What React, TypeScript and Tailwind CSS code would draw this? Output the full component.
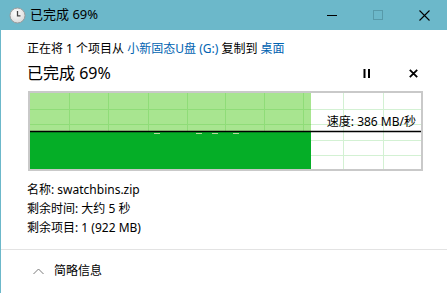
import React from "react";

const font = { fontFamily: '"Noto Sans", "Noto Sans CJK SC", sans-serif' };

function Clock() {
  return (
    <svg width="17" height="17" viewBox="0 0 17 17">
      <defs>
        <radialGradient id="cg" cx="40%" cy="35%" r="70%">
          <stop offset="0%" stopColor="#ffffff" />
          <stop offset="100%" stopColor="#d8d8d8" />
        </radialGradient>
      </defs>
      <circle cx="8.5" cy="8.5" r="7.5" fill="url(#cg)" stroke="#9a9a9a" strokeWidth="1" />
      <path d="M8.5 4 V8.8 H11.5" stroke="#444" strokeWidth="1.3" fill="none" />
    </svg>
  );
}

function Chart() {
  const vx = [39, 78, 118, 157, 195, 234, 273, 313, 353];
  const hy = [16, 31, 47, 62];
  const greenW = 281;
  const lineY = 39;
  return (
    <div className="relative w-[395px] h-[80px] border-2 border-[#c9c9c9] bg-white">
      <svg width="391" height="76" className="block">
        {vx.map((x) => (
          <line key={"w" + x} x1={x + 0.5} y1={0} x2={x + 0.5} y2={76} stroke="#d3f1d3" />
        ))}
        {hy.map((y) => (
          <line key={"h" + y} x1={0} y1={y + 0.5} x2={391} y2={y + 0.5} stroke="#d3f1d3" />
        ))}
        <rect x="0" y="0" width={greenW} height={lineY} fill="#a8e590" />
        {vx
          .filter((x) => x < greenW)
          .map((x) => (
            <line key={"g" + x} x1={x + 0.5} y1={0} x2={x + 0.5} y2={lineY} stroke="#8fdc78" />
          ))}
        {hy
          .filter((y) => y < lineY)
          .map((y) => (
            <line key={"gh" + y} x1={0} y1={y + 0.5} x2={greenW} y2={y + 0.5} stroke="#8fdc78" />
          ))}
        <rect x="0" y={lineY} width={greenW} height={76 - lineY} fill="#05ae27" />
        {[124, 166, 182, 203].map((x) => (
          <line key={"d" + x} x1={x} y1={lineY + 1.5} x2={x + 6} y2={lineY + 1.5} stroke="#b9d99a" />
        ))}
        <line x1="0" y1={lineY - 0.5} x2="391" y2={lineY - 0.5} stroke="#000" strokeWidth="1.5" />
      </svg>
      <div className="absolute right-[5px] top-[21px] text-[12px] leading-[16px] text-black">
        速度: 386 MB/秒
      </div>
    </div>
  );
}

export default function App() {
  return (
    <div className="w-[447px] h-[293px] bg-white overflow-hidden flex flex-col border-l border-[#6cb8ca]" style={font}>
      <div className="h-[30px] bg-[#6cb8ca] flex items-center pl-[8px] shrink-0">
        <Clock />
        <span className="ml-[4px] text-[13px] text-black">已完成 69%</span>
        <div className="ml-auto flex items-center h-full">
          <div className="w-[46px] h-full flex items-center justify-center">
            <div className="w-[10px] h-[1px] bg-black" />
          </div>
          <div className="w-[46px] h-full flex items-center justify-center">
            <div className="w-[10px] h-[10px] border border-[#4f8d9c] opacity-70" />
          </div>
          <div className="w-[46px] h-full flex items-center justify-center">
            <svg width="11" height="11" viewBox="0 0 11 11">
              <path d="M0.5 0.5 L10.5 10.5 M10.5 0.5 L0.5 10.5" stroke="#000" strokeWidth="1.1" />
            </svg>
          </div>
        </div>
      </div>
      <div className="flex flex-col pl-[26px] pr-[24px]">
        <div className="mt-[10px] text-[12px] leading-[18px] text-black whitespace-nowrap">
          正在将 1 个项目从 <span className="text-[#0063b1]">小新固态U盘 (G:)</span> 复制到{" "}
          <span className="text-[#0063b1]">桌面</span>
        </div>
        <div className="flex items-center mt-[4px] h-[22px]">
          <span className="text-[16px] leading-[22px] text-black">已完成 69%</span>
          <div className="ml-auto flex items-center">
            <svg width="8" height="9" viewBox="0 0 8 9" className="mr-[38px]">
              <rect x="0.5" y="0" width="2" height="9" fill="#000" />
              <rect x="5" y="0" width="2" height="9" fill="#000" />
            </svg>
            <svg width="9" height="9" viewBox="0 0 9 9" className="mr-[5px]">
              <path d="M0.8 0.8 L8.2 8.2 M8.2 0.8 L0.8 8.2" stroke="#000" strokeWidth="1.8" />
            </svg>
          </div>
        </div>
        <div className="mt-[7px] ml-[1px]">
          <Chart />
        </div>
        <div className="mt-[9px] text-[12px] leading-[19px] text-black">
          <div>名称: swatchbins.zip</div>
          <div>剩余时间: 大约 5 秒</div>
          <div>剩余项目: 1 (922 MB)</div>
        </div>
      </div>
      <div className="mt-[12px] h-px bg-[#e3e3e3]" />
      <div className="flex items-center pl-[32px] h-[42px]">
        <svg width="11" height="7" viewBox="0 0 11 7">
          <path d="M0.5 6 L5.5 1 L10.5 6" stroke="#7a7a7a" strokeWidth="1" fill="none" />
        </svg>
        <span className="ml-[10px] text-[12px] text-black">简略信息</span>
      </div>
    </div>
  );
}
